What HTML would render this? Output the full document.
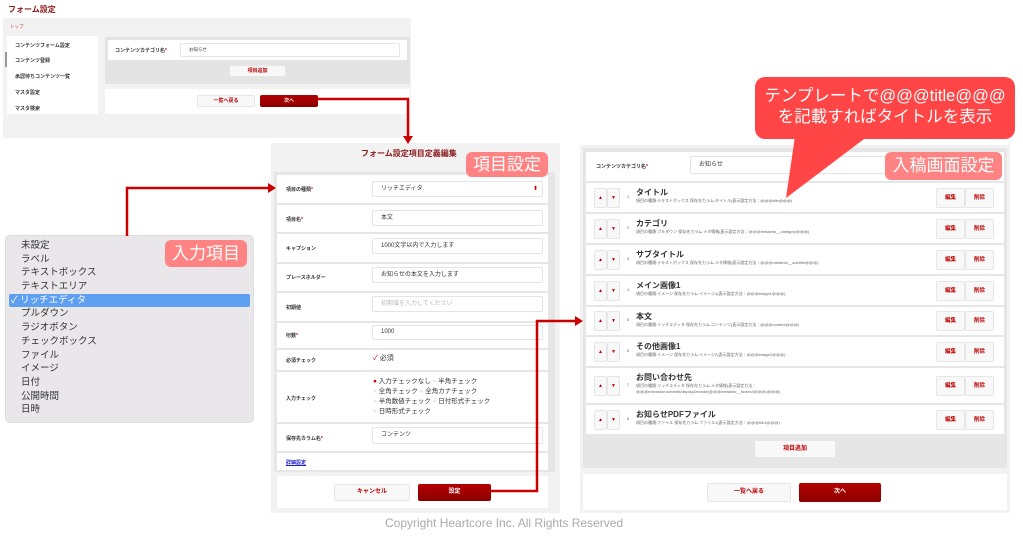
<!DOCTYPE html>
<html><head><meta charset="utf-8"><style>
*{margin:0;padding:0;box-sizing:border-box}
body{width:1023px;height:537px;background:#fff;position:relative;overflow:hidden;font-family:"Liberation Sans","Noto Sans CJK JP",sans-serif;color:#333}
.a{position:absolute}
.w{position:absolute;background:#fff}
.t{position:absolute;white-space:nowrap}
.s{font-size:5px;font-weight:bold;color:#333}
.red{color:#c00}
.btn{position:absolute;background:#f8f8f8;border:1px solid #e6e6e6;border-radius:2px;color:#b00;font-weight:bold;text-align:center}
.btnr{position:absolute;background:linear-gradient(#b30000,#8c0000);border-radius:2px;color:#fff;font-weight:bold;text-align:center}
.inp{position:absolute;background:#fff;border:1px solid #e4e4e4;border-radius:2px;font-size:6px;padding-left:8px}
.pink{position:absolute;background:#ff8383;color:#fff;border-radius:6px;font-size:17px;text-align:center}
.dd div{height:13.7px;line-height:13.7px;font-size:9.5px;color:#333;padding-left:15px}
</style></head><body>

<!-- top-left panel -->
<div class="t" style="left:8px;top:4px;font-size:8px;font-weight:bold;color:#8b1a1a">フォーム設定</div>
<div class="a" style="left:3px;top:18px;width:408px;height:120px;background:#f2f2f2"></div>
<div class="t" style="left:10px;top:24px;font-size:4.5px;color:#c33">トップ</div>
<div class="w" style="left:7px;top:36px;width:91px;height:78px"></div>
<div class="a" style="left:5px;top:52px;width:2px;height:15px;background:#999"></div>
<div class="t s" style="left:15px;top:42px">コンテンツフォーム設定</div>
<div class="t s" style="left:15px;top:57px">コンテンツ登録</div>
<div class="t s" style="left:15px;top:73px">承認待ちコンテンツ一覧</div>
<div class="t s" style="left:15px;top:89px">マスタ設定</div>
<div class="t s" style="left:15px;top:105px">マスタ検索</div>
<div class="a" style="left:105px;top:37px;width:305px;height:47px;background:#e4e4e4"></div>
<div class="w" style="left:108px;top:40px;width:299px;height:20px"></div>
<div class="t s" style="left:115px;top:47px">コンテンツカテゴリ名<span class="red">*</span></div>
<div class="inp" style="left:180px;top:43px;width:220px;height:14px;font-size:4.5px;line-height:12px">お知らせ</div>
<div class="btn" style="left:229px;top:65px;width:57px;height:12px;font-size:5px;line-height:11px">項目追加</div>
<div class="w" style="left:105px;top:89px;width:305px;height:25px"></div>
<div class="btn" style="left:197px;top:95px;width:58px;height:12px;font-size:5px;line-height:11px">一覧へ戻る</div>
<div class="btnr" style="left:260px;top:95px;width:58px;height:12px;font-size:5px;line-height:12px">次へ</div>

<!-- middle panel -->
<div class="a" style="left:271px;top:143px;width:289px;height:370px;background:#f2f2f2"></div>
<div class="t" style="left:361px;top:148px;font-size:8px;font-weight:bold;color:#8b1a1a">フォーム設定項目定義編集</div>
<div class="a" style="left:274px;top:172px;width:281px;height:300px;background:#e6e6e6"></div>
<div class="w" style="left:277px;top:175px;width:271px;height:28px"></div>
<div class="w" style="left:277px;top:205px;width:271px;height:27px"></div>
<div class="w" style="left:277px;top:234px;width:271px;height:28px"></div>
<div class="w" style="left:277px;top:264px;width:271px;height:27px"></div>
<div class="w" style="left:277px;top:293px;width:271px;height:28px"></div>
<div class="w" style="left:277px;top:323px;width:271px;height:25px"></div>
<div class="w" style="left:277px;top:350px;width:271px;height:20px"></div>
<div class="w" style="left:277px;top:372px;width:271px;height:50px"></div>
<div class="w" style="left:277px;top:424px;width:271px;height:27px"></div>
<div class="w" style="left:277px;top:453px;width:271px;height:17px"></div>
<div class="t s" style="left:286px;top:186px">項目の種類<span class="red">*</span></div>
<div class="t s" style="left:286px;top:216px">項目名<span class="red">*</span></div>
<div class="t s" style="left:286px;top:245px">キャプション</div>
<div class="t s" style="left:286px;top:274px">プレースホルダー</div>
<div class="t s" style="left:286px;top:304px">初期値</div>
<div class="t s" style="left:286px;top:332px">桁数<span class="red">*</span></div>
<div class="t s" style="left:286px;top:357px">必須チェック</div>
<div class="t s" style="left:286px;top:395px">入力チェック</div>
<div class="t s" style="left:286px;top:435px">保存先カラム名<span class="red">*</span></div>
<div class="t" style="left:286px;top:459px;font-size:5px;font-weight:bold;color:#22c;text-decoration:underline">詳細設定</div>
<div class="inp" style="left:372px;top:181px;width:171px;height:16px;line-height:14px">リッチエディタ<span style="position:absolute;right:4px;color:#b00">⬍</span></div>
<div class="inp" style="left:372px;top:210px;width:171px;height:16px;line-height:14px">本文</div>
<div class="inp" style="left:372px;top:238px;width:171px;height:16px;line-height:14px">1000文字以内で入力します</div>
<div class="inp" style="left:372px;top:267px;width:171px;height:16px;line-height:14px">お知らせの本文を入力します</div>
<div class="inp" style="left:372px;top:296px;width:171px;height:16px;line-height:14px;color:#bbb">初期値を入力してください</div>
<div class="inp" style="left:372px;top:325px;width:171px;height:15px;line-height:13px">1000</div>
<div class="t" style="left:373px;top:353px;font-size:7px;color:#333"><span class="red">✓</span> 必須</div>
<div class="t" style="left:373px;top:377px;font-size:6.5px;line-height:10px;color:#333"><span class="red">●</span> 入力チェックなし <span style="color:#e8e8e8">●</span> 半角チェック<br><span style="color:#e8e8e8">●</span> 全角チェック <span style="color:#e8e8e8">●</span> 全角カナチェック<br><span style="color:#e8e8e8">●</span> 半角数値チェック <span style="color:#e8e8e8">●</span> 日付形式チェック<br><span style="color:#e8e8e8">●</span> 日時形式チェック</div>
<div class="inp" style="left:372px;top:427px;width:171px;height:17px;line-height:15px">コンテンツ</div>
<div class="w" style="left:277px;top:476px;width:271px;height:32px"></div>
<div class="btn" style="left:334px;top:484px;width:76px;height:17px;font-size:6px;line-height:15px">キャンセル</div>
<div class="btnr" style="left:418px;top:484px;width:73px;height:17px;font-size:6px;line-height:17px">設定</div>
<div class="pink" style="left:466px;top:152px;width:82px;height:25px;line-height:25px">項目設定</div>

<!-- dropdown -->
<div class="a dd" style="left:5px;top:235px;width:249px;height:188px;background:#e9e7ea;border-radius:5px;border:1px solid #ddd;padding-top:3px">
<div>未設定</div><div>ラベル</div><div>テキストボックス</div><div>テキストエリア</div>
<div style="background:#5e9ff0;color:#fff;margin:0 3px;padding-left:2px;border-radius:2px">✓ リッチエディタ</div>
<div>プルダウン</div><div>ラジオボタン</div><div>チェックボックス</div><div>ファイル</div><div>イメージ</div><div>日付</div><div>公開時間</div><div>日時</div>
</div>
<div class="pink" style="left:165px;top:240px;width:82px;height:27px;line-height:27px">入力項目</div>

<!-- right panel -->
<div class="a" style="left:580px;top:145px;width:430px;height:368px;background:#f2f2f2"></div>
<div class="a" style="left:583px;top:148px;width:424px;height:320px;background:#e6e6e6"></div>
<div class="w" style="left:586px;top:152px;width:418px;height:29px"></div>
<div class="t s" style="left:596px;top:163px">コンテンツカテゴリ名<span class="red">*</span></div>
<div class="inp" style="left:690px;top:156px;width:220px;height:18px;line-height:16px">お知らせ</div>

<div id="rows"></div>

<div class="btn" style="left:754px;top:440px;width:82px;height:18px;font-size:6px;line-height:16px">項目追加</div>
<div class="w" style="left:583px;top:474px;width:424px;height:36px"></div>
<div class="btn" style="left:707px;top:483px;width:84px;height:19px;font-size:6px;line-height:17px">一覧へ戻る</div>
<div class="btnr" style="left:799px;top:483px;width:82px;height:19px;font-size:6px;line-height:19px">次へ</div>
<div class="pink" style="left:885px;top:152px;width:117px;height:28px;line-height:28px">入稿画面設定</div>

<!-- arrows -->
<svg class="a" style="left:0;top:0" width="1023" height="537">
<g fill="none" stroke="#c00" stroke-width="2.5">
<polyline points="318,99 408,99 408,137"/>
<polyline points="127,236 127,188 268,188"/>
<polyline points="491,491 537,491 537,321 576,321"/>
</g>
<g fill="#c00">
<polygon points="403,136 413,136 408,144"/>
<polygon points="268,183 268,193 276,188"/>
<polygon points="575,316 575,326 583,321"/>
</g>
<polygon points="795,136 868,136 786,198" fill="#ff4545"/>
</svg>
<div class="a" style="left:755px;top:77px;width:260px;height:62px;background:#ff4545;border-radius:10px;color:#fff;font-size:16.5px;line-height:21px;text-align:center;padding-top:9px">テンプレートで@@@title@@@<br>を記載すればタイトルを表示</div>

<div class="t" style="left:385px;top:516px;font-size:12px;color:#aaa">Copyright Heartcore Inc. All Rights Reserved</div>

<script>
var d=[["タイトル","項目の種類:テキストボックス 保存先カラム:タイトル(表示設定方法：@@@title@@@)",183,29],
["カテゴリ","項目の種類:プルダウン 保存先カラム:メタ情報(表示設定方法：@@@metainfo__category@@@)",214,29],
["サブタイトル","項目の種類:テキストボックス 保存先カラム:メタ情報(表示設定方法：@@@metainfo__subtitle@@@)",245,29],
["メイン画像1","項目の種類:イメージ 保存先カラム:イメージ1(表示設定方法：@@@image1@@@)",276,29],
["本文","項目の種類:リッチエディタ 保存先カラム:コンテンツ(表示設定方法：@@@content@@@)",307,28],
["その他画像1","項目の種類:イメージ 保存先カラム:イメージ2(表示設定方法：@@@image2@@@)",337,29],
["お問い合わせ先","項目の種類:リッチエディタ 保存先カラム:メタ情報(表示設定方法：<br>@@@extension:webedit/displayDecode(@@@metainfo__footer2@@@)@@@)",368,35],
["お知らせPDFファイル","項目の種類:ファイル 保存先カラム:ファイル1(表示設定方法：@@@file1@@@)",405,29]];
var h="";
d.forEach(function(r,i){var y=r[2],H=r[3],c=y+H/2;
h+='<div class="w" style="left:586px;top:'+y+'px;width:418px;height:'+H+'px"></div>';
h+='<div class="btn" style="left:594px;top:'+(c-10)+'px;width:13px;height:20px;font-size:5px;line-height:18px">▲</div>';
h+='<div class="btn" style="left:607px;top:'+(c-10)+'px;width:13px;height:20px;font-size:5px;line-height:18px">▼</div>';
h+='<div class="t" style="left:627px;top:'+(c-4)+'px;font-size:4px;color:#666">'+(i+1)+'</div>';
h+='<div class="t" style="left:636px;top:'+(y+4)+'px;font-size:8px;font-weight:bold;color:#333">'+r[0]+'</div>';
h+='<div class="t" style="left:636px;top:'+(y+15)+'px;font-size:4px;line-height:5.5px;color:#666">'+r[1]+'</div>';
h+='<div class="btn" style="left:936px;top:'+(c-10)+'px;width:29px;height:20px;font-size:5.5px;line-height:18px">編集</div>';
h+='<div class="btn" style="left:965px;top:'+(c-10)+'px;width:29px;height:20px;font-size:5.5px;line-height:18px">削除</div>';});
document.getElementById("rows").outerHTML=h;
</script>
</body></html>
